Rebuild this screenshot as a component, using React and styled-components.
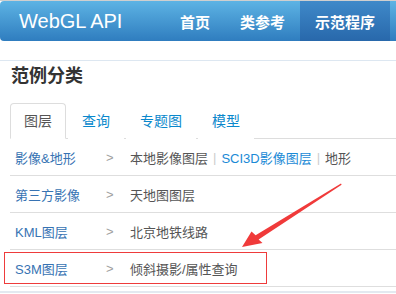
import React from "react";
import styled, { createGlobalStyle } from "styled-components";

const GlobalStyle = createGlobalStyle`
  body {
    margin: 0;
    background: #fff;
    font-family: "Liberation Sans", "Noto Sans CJK SC", sans-serif;
  }
`;

const Page = styled.div`
  position: relative;
  width: 396px;
  height: 294px;
  overflow: hidden;
  border-top: 1px solid #cfcfcf;
  box-sizing: border-box;
`;

const Navbar = styled.div`
  display: flex;
  align-items: stretch;
  height: 40px;
  border-radius: 4px 0 0 4px;
  background: linear-gradient(#5db3e4, #2f7dbf);
`;

const Brand = styled.div`
  display: flex;
  align-items: center;
  flex-shrink: 0;
  padding-left: 19px;
  width: 146px;
  color: #fff;
  font-size: 20px;
  white-space: nowrap;
`;

const NavList = styled.ul`
  display: flex;
  flex-shrink: 0;
  margin: 0;
  padding: 0;
  list-style: none;
`;

const NavItem = styled.li`
  display: flex;
  align-items: center;
  flex-shrink: 0;
  padding: 0 15px;
  color: #fff;
  font-size: 15px;
  font-weight: bold;
  white-space: nowrap;
  background: ${(p) => (p.$active ? "linear-gradient(#3f89c9, #2868ab)" : "transparent")};
`;

const Section = styled.div`
  margin-top: 19px;
  border-top: 1px solid #dde7f1;
`;

const Title = styled.h3`
  margin: 3px 0 0 11px;
  font-size: 18px;
  line-height: 24px;
  font-weight: bold;
  color: #333;
`;

const Tabs = styled.ul`
  display: flex;
  margin: 15px 0 0 10px;
  padding: 0;
  list-style: none;
  border-bottom: 1px solid #ddd;
`;

const Tab = styled.li`
  margin: 0 2px -1px 0;
  padding: 0 13px;
  height: 34px;
  line-height: 34px;
  font-size: 14px;
  color: ${(p) => (p.$active ? "#555" : "#0a88cc")};
  background: #fff;
  border: 1px solid ${(p) => (p.$active ? "#ddd" : "transparent")};
  border-bottom-color: ${(p) => (p.$active ? "#fff" : "transparent")};
  border-radius: 4px 4px 0 0;
`;

const Rows = styled.div`
  margin-left: 10px;
`;

const Row = styled.div`
  display: flex;
  align-items: center;
  height: 36px;
  border-bottom: 1px solid #dedede;
  font-size: 13px;
  white-space: nowrap;
`;

const Label = styled.span`
  width: 91px;
  padding-left: 5px;
  color: #3773b3;
`;

const Arrow = styled.span`
  width: 24px;
  color: #a0a0a0;
`;

const Value = styled.span`
  color: ${(p) => (p.$link ? "#1a8ad6" : "#555")};
`;

const Sep = styled.span`
  margin: 0 5px;
  color: #ccc;
`;

const Footer = styled.div`
  margin-top: 4px;
  border-top: 2px solid #e3e9f0;
`;

const Highlight = styled.div`
  position: absolute;
  left: 4px;
  top: 251px;
  width: 261px;
  height: 30px;
  border: 1px solid #ee3b3b;
`;

const Pointer = styled.svg`
  position: absolute;
  left: 0;
  top: 0;
`;

const rows = [
  { label: "影像&地形", values: ["本地影像图层", "SCI3D影像图层", "地形"] },
  { label: "第三方影像", values: ["天地图图层"] },
  { label: "KML图层", values: ["北京地铁线路"] },
  { label: "S3M图层", values: ["倾斜摄影/属性查询"] },
];

export default function App() {
  return (
    <>
      <GlobalStyle />
      <Page>
        <Navbar>
          <Brand>WebGL API</Brand>
          <NavList>
            <NavItem>首页</NavItem>
            <NavItem>类参考</NavItem>
            <NavItem $active>示范程序</NavItem>
          </NavList>
        </Navbar>
        <Section>
          <Title>范例分类</Title>
          <Tabs>
            <Tab $active>图层</Tab>
            <Tab>查询</Tab>
            <Tab>专题图</Tab>
            <Tab>模型</Tab>
          </Tabs>
          <Rows>
            {rows.map((row) => (
              <Row key={row.label}>
                <Label>{row.label}</Label>
                <Arrow>&gt;</Arrow>
                {row.values.map((v, i) => (
                  <React.Fragment key={v}>
                    {i > 0 && <Sep>|</Sep>}
                    <Value $link={v.startsWith("SCI3D")}>{v}</Value>
                  </React.Fragment>
                ))}
              </Row>
            ))}
          </Rows>
          <Footer />
        </Section>
        <Highlight />
        <Pointer width="396" height="294" viewBox="0 0 396 294">
          <path
            d="M341 182.6 L255.6 234.2 L251.5 230.5 L242 246 L262.5 242 L258.6 238.6 L341.6 183.8 Z"
            fill="#f03a3a"
          />
        </Pointer>
      </Page>
    </>
  );
}
